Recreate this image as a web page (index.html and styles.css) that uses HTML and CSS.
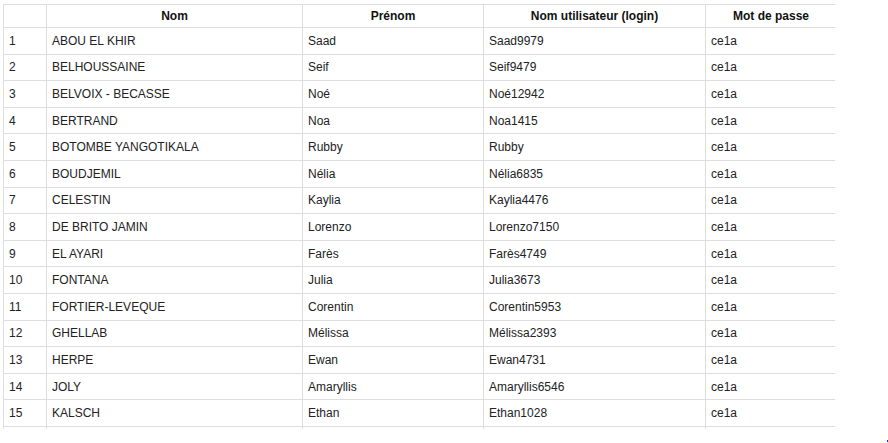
FILE: index.html
```html
<!DOCTYPE html>
<html lang="fr">
<head>
<meta charset="utf-8">
<title>Liste des élèves</title>
<link rel="stylesheet" href="styles.css">
</head>
<body>
<div class="scroller">
<table class="grid">
<colgroup>
<col class="c-num"><col class="c-nom"><col class="c-prenom"><col class="c-login"><col class="c-pass">
</colgroup>
<thead>
<tr><th></th><th>Nom</th><th>Prénom</th><th>Nom utilisateur (login)</th><th>Mot de passe</th></tr>
</thead>
<tbody>
<tr><td>1</td><td>ABOU EL KHIR</td><td>Saad</td><td>Saad9979</td><td>ce1a</td></tr>
<tr><td>2</td><td>BELHOUSSAINE</td><td>Seif</td><td>Seif9479</td><td>ce1a</td></tr>
<tr><td>3</td><td>BELVOIX - BECASSE</td><td>Noé</td><td>Noé12942</td><td>ce1a</td></tr>
<tr><td>4</td><td>BERTRAND</td><td>Noa</td><td>Noa1415</td><td>ce1a</td></tr>
<tr><td>5</td><td>BOTOMBE YANGOTIKALA</td><td>Rubby</td><td>Rubby</td><td>ce1a</td></tr>
<tr><td>6</td><td>BOUDJEMIL</td><td>Nélia</td><td>Nélia6835</td><td>ce1a</td></tr>
<tr><td>7</td><td>CELESTIN</td><td>Kaylia</td><td>Kaylia4476</td><td>ce1a</td></tr>
<tr><td>8</td><td>DE BRITO JAMIN</td><td>Lorenzo</td><td>Lorenzo7150</td><td>ce1a</td></tr>
<tr><td>9</td><td>EL AYARI</td><td>Farès</td><td>Farès4749</td><td>ce1a</td></tr>
<tr><td>10</td><td>FONTANA</td><td>Julia</td><td>Julia3673</td><td>ce1a</td></tr>
<tr><td>11</td><td>FORTIER-LEVEQUE</td><td>Corentin</td><td>Corentin5953</td><td>ce1a</td></tr>
<tr><td>12</td><td>GHELLAB</td><td>Mélissa</td><td>Mélissa2393</td><td>ce1a</td></tr>
<tr><td>13</td><td>HERPE</td><td>Ewan</td><td>Ewan4731</td><td>ce1a</td></tr>
<tr><td>14</td><td>JOLY</td><td>Amaryllis</td><td>Amaryllis6546</td><td>ce1a</td></tr>
<tr><td>15</td><td>KALSCH</td><td>Ethan</td><td>Ethan1028</td><td>ce1a</td></tr>
<tr class="more"><td></td><td></td><td></td><td></td><td></td></tr>
</tbody>
</table>
</div>
<span class="dot"></span>
</body>
</html>
```

FILE: styles.css
```css
html, body {
  margin: 0;
  padding: 0;
  background: #fff;
}
body {
  font-family: "Liberation Sans", Arial, sans-serif;
  font-size: 12px;
  color: #222;
  width: 888px;
  height: 443px;
  overflow: hidden;
  position: relative;
}
.scroller {
  margin: 4px 0 0 3px;
  width: 832px;
  height: 425px;
  overflow: hidden;
}
.grid {
  border-collapse: collapse;
  table-layout: fixed;
  width: 833px;
}
.c-num { width: 43px; }
.c-nom { width: 256px; }
.c-prenom { width: 181px; }
.c-login { width: 222px; }
.c-pass { width: 131px; }
.grid th, .grid td {
  border: 1px solid #dddddd;
  padding: 0 5px;
  white-space: nowrap;
  overflow: hidden;
  vertical-align: middle;
}
.grid th {
  height: 22px;
  font-weight: bold;
  text-align: center;
  color: #111;
}
.grid td {
  text-align: left;
}
.grid tbody tr {
  height: 26.6px;
}
.dot {
  position: absolute;
  left: 887px;
  top: 440px;
  width: 1px;
  height: 2px;
  background: #2222ee;
}
```
